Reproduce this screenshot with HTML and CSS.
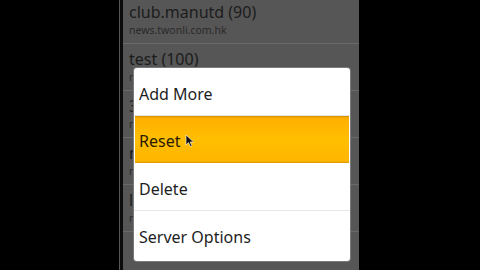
FILE: index.html
```html
<!DOCTYPE html>
<html>
<head>
<meta charset="utf-8">
<link rel="stylesheet" href="styles.css">
</head>
<body>
<div class="frame">
  <div class="side-left"></div>
  <div class="edge"></div>
  <div class="gap"></div>
  <div class="screen">
    <div class="list">
      <div class="row"><div class="title">club.manutd (90)</div><div class="sub">news.twonli.com.hk</div></div>
      <div class="row"><div class="title">test (100)</div><div class="sub">news.twonli.com.hk</div></div>
      <div class="row"><div class="title">3d (100)</div><div class="sub">news.twonli.com.hk</div></div>
      <div class="row"><div class="title">music (100)</div><div class="sub">news.twonli.com.hk</div></div>
      <div class="row"><div class="title">life (100)</div><div class="sub">news.twonli.com.hk</div></div>
    </div>
    <div class="menu">
      <div class="item">Add More</div>
      <div class="item selected">Reset <svg class="cursor" width="9" height="12" viewBox="0 0 9 12"><path d="M1 0 L1 10 L3.5 7.6 L5.4 11.6 L7 10.8 L5.2 7 L8.6 7 Z" fill="#111" stroke="#fff" stroke-width="0.6"/></svg></div>
      <div class="item">Delete</div>
      <div class="item last">Server Options</div>
    </div>
  </div>
</div>
</body>
</html>
```
FILE: styles.css
```css
html, body {
  margin: 0;
  padding: 0;
  background: #000;
  width: 480px;
  height: 270px;
  overflow: hidden;
}
.frame {
  display: flex;
  height: 270px;
}
.side-left {
  width: 119px;
  background: #000;
}
.edge {
  width: 1px;
  background: #555;
}
.gap {
  width: 3px;
  background: #0c0c0c;
}
.screen {
  position: relative;
  width: 236px;
  height: 270px;
  background: #565656;
  overflow: hidden;
  font-family: "Noto Sans", "Open Sans", sans-serif;
}
.list {
  margin-top: -3px;
}
.row {
  height: 46px;
  border-bottom: 1px solid #6a6a6a;
  padding-left: 6px;
  display: flex;
  flex-direction: column;
  justify-content: center;
}
.title {
  font-size: 16px;
  line-height: 19px;
  color: #1c1c1c;
}
.sub {
  font-size: 10.5px;
  line-height: 13px;
  margin-top: 2px;
  color: #2a2a2a;
}
.menu {
  position: absolute;
  left: 11px;
  top: 68px;
  width: 216px;
  height: 193px;
  background: #fff;
  border-radius: 3px;
  box-shadow: 0 0 0 1px #7a7a7a;
  display: flex;
  flex-direction: column;
  overflow: hidden;
}
.item {
  height: 48px;
  display: flex;
  align-items: center;
  padding-left: 5px;
  padding-top: 4px;
  font-size: 16px;
  color: #1e1e1e;
  border-bottom: 1px solid #e6e6e6;
  box-sizing: border-box;
}
.item.last {
  border-bottom: none;
  height: 49px;
  padding-top: 2px;
}
.item.selected {
  margin: 0 1px;
  padding-left: 4px;
  padding-top: 3px;
  height: 47px;
  background: linear-gradient(#c88e00 0, #ffb000 2px, #ffbe00 50%, #ffb600 calc(100% - 2px), #d99a00 100%);
  border-bottom: none;
  color: #2a1a00;
}
.cursor {
  margin-left: 5px;
}
```
